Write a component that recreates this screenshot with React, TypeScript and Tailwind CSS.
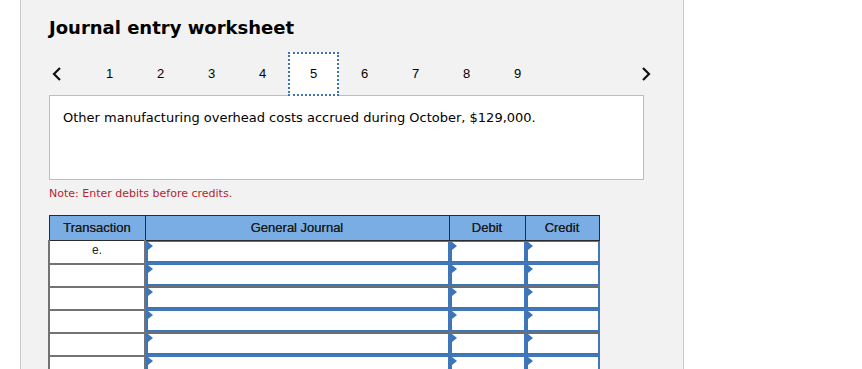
const tabs = [1, 2, 3, 4, 5, 6, 7, 8, 9];
const rows = ["e.", "", "", "", "", ""];

const Marker = () => (
  <span className="absolute left-0 top-0 h-0 w-0 border-y-[4px] border-l-[5px] border-y-transparent border-l-[#3b74bd]" />
);

const InputCell = ({ w }: { w: string }) => (
  <td className={`${w} h-[23px] border border-[#707070] p-0`}>
    <div className="relative h-full border border-b-2 border-l-2 border-[#3e75b9] bg-white">
      <Marker />
    </div>
  </td>
);

export default function App() {
  return (
    <div className="flex h-[369px] overflow-hidden bg-white font-['DejaVu_Sans',sans-serif]">
      <div className="ml-5 w-[664px] shrink-0 border-x border-[#c9c9c9] bg-[#f2f2f2] pl-7 pr-[39px] pt-[16px]">
        <h1 className="text-[18px] font-bold leading-[24px] text-black">Journal entry worksheet</h1>

        <div className="relative z-10 mt-[12px] flex h-[44px] w-[603px] items-center font-['Liberation_Sans',sans-serif] text-[13px] text-black">
          <span className="flex w-[35px] justify-start pl-[3px]">
            <svg width="10" height="14" viewBox="0 0 10 14">
              <path d="M8 1 L2 7 L8 13" fill="none" stroke="#111" strokeWidth="2.2" />
            </svg>
          </span>
          {tabs.map((t) => (
            <span
              key={t}
              className={`flex h-[44px] w-[51px] items-center justify-center ${
                t === 5 ? "border-2 border-dotted border-[#3d72b7] bg-white" : ""
              }`}
            >
              {t}
            </span>
          ))}
          <span className="ml-auto flex pr-[1px]">
            <svg width="10" height="14" viewBox="0 0 10 14">
              <path d="M2 1 L8 7 L2 13" fill="none" stroke="#111" strokeWidth="2.2" />
            </svg>
          </span>
        </div>

        <div className="-mt-[1px] h-[85px] border border-[#bdbdbd] bg-white px-[13px] pt-[14px] text-[13px] leading-[16px] text-black">
          Other manufacturing overhead costs accrued during October, $129,000.
        </div>

        <p className="mt-[7px] text-[11px] leading-[14px] text-[#b8242c]">Note: Enter debits before credits.</p>

        <table className="-ml-px mt-[14px] border-collapse font-['Liberation_Sans',sans-serif] text-[13px]">
          <thead>
            <tr className="h-[25px] bg-[#79ade4] text-[#1f1f1f]">
              <th className="w-[96px] border border-[#2b2b2b] font-normal [text-shadow:0_0_0.6px_#1f1f1f]">Transaction</th>
              <th className="w-[304px] border border-[#2b2b2b] font-normal [text-shadow:0_0_0.6px_#1f1f1f]">General Journal</th>
              <th className="w-[76px] border border-[#2b2b2b] font-normal [text-shadow:0_0_0.6px_#1f1f1f]">Debit</th>
              <th className="w-[74px] border border-[#2b2b2b] font-normal [text-shadow:0_0_0.6px_#1f1f1f]">Credit</th>
            </tr>
          </thead>
          <tbody>
            {rows.map((r, i) => (
              <tr key={i}>
                <td className="h-[23px] w-[96px] border-x-2 border-b-2 border-[#737373] bg-white pb-[3px] text-center text-[12px] leading-[14px] text-[#222]">
                  {r}
                </td>
                <InputCell w="w-[304px]" />
                <InputCell w="w-[76px]" />
                <InputCell w="w-[74px]" />
              </tr>
            ))}
          </tbody>
        </table>
      </div>
    </div>
  );
}
